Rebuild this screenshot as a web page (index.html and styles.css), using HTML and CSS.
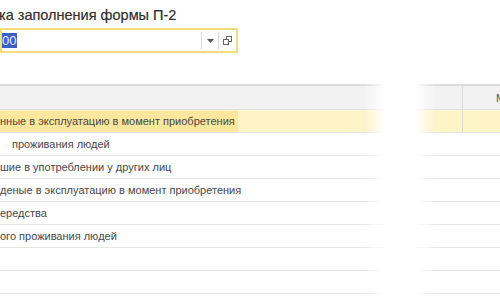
FILE: index.html
```html
<!DOCTYPE html>
<html lang="ru">
<head>
<meta charset="utf-8">
<link rel="stylesheet" href="styles.css">
</head>
<body>
<div class="page">
  <h1 class="title">ка заполнения формы П-2</h1>
  <div class="field">
    <div class="field-value"><span class="sel">00</span></div>
    <div class="field-btn drop"><svg width="7" height="4" viewBox="0 0 7 4"><path d="M0 0h7L3.5 4z" fill="#555"/></svg></div>
    <div class="field-btn open"><svg width="9" height="9" viewBox="0 0 9 9"><rect x="3.5" y="0.5" width="5" height="5" fill="#fff" stroke="#666"/><rect x="0.5" y="3.5" width="5" height="5" fill="#fff" stroke="#666"/></svg></div>
  </div>
  <div class="table">
    <div class="row head"><div class="cell main"></div><div class="cell side">М</div></div>
    <div class="row current"><div class="cell main"><span class="hl">нные в эксплуатацию в момент приобретения</span></div><div class="cell side"></div></div>
    <div class="row"><div class="cell main ind">проживания людей</div></div>
    <div class="row"><div class="cell main">шие в употреблении у других лиц</div></div>
    <div class="row"><div class="cell main">деные в эксплуатацию в момент приобретения</div></div>
    <div class="row"><div class="cell main">ередства</div></div>
    <div class="row"><div class="cell main">ого проживания людей</div></div>
    <div class="row"><div class="cell main"></div></div>
    <div class="row"><div class="cell main"></div></div>
    <div class="fade"></div>
  </div>
</div>
</body>
</html>
```
FILE: styles.css
```css
html, body { margin: 0; padding: 0; background: #fff; }
body { width: 500px; height: 300px; overflow: hidden; font-family: "Liberation Sans", Arial, sans-serif; color: #474747; }
.page { display: flex; flex-direction: column; }
.title { margin: 6px 0 0 -1px; font-size: 14.5px; font-weight: normal; color: #2e2e2e; line-height: 18px; height: 18px; -webkit-text-stroke: 0.2px #2e2e2e; }
.field { margin-top: 4px; width: 238px; height: 25px; box-sizing: border-box; border: 2px solid #f3dd78; display: flex; align-items: center; background: #fff; }
.field-value { flex: 1; display: flex; align-items: center; padding-left: 0; font-size: 13px; color: #333; }
.sel { background: #3b5fc6; color: #e8ecff; padding: 1px 1px 1px 0; line-height: 13px; }
.field-btn { width: 16px; height: 17px; border-left: 1px solid #d6d6d6; display: flex; align-items: center; justify-content: center; }
.field-btn.open { width: 17px; }
.table { position: relative; margin-top: 31px; border-top: 2px solid #dcdcdc; }
.row { height: 23px; box-sizing: border-box; border-bottom: 1px solid #e6e6e6; display: flex; font-size: 11px; }
.row.head { height: 24px; background: #f2f2f2; border-bottom: 1px solid #e0e0e0; color: #555; }
.row.current { background: #fff4c8; }
.cell { display: flex; align-items: center; white-space: nowrap; }
.cell.main { flex: 1; }
.cell.side { width: 38px; border-left: 1px solid #dcdcdc; padding-left: 33px; box-sizing: border-box; overflow: hidden; }
.cell.ind { padding-left: 12px; }
.hl { background: #fce79c; height: 21px; display: flex; align-items: center; padding-right: 3px; }
.fade { position: absolute; top: -4px; bottom: 0; left: 364px; width: 72px; background: linear-gradient(90deg, rgba(255,255,255,0), #fff 30%, #fff 70%, rgba(255,255,255,0)); }
```
